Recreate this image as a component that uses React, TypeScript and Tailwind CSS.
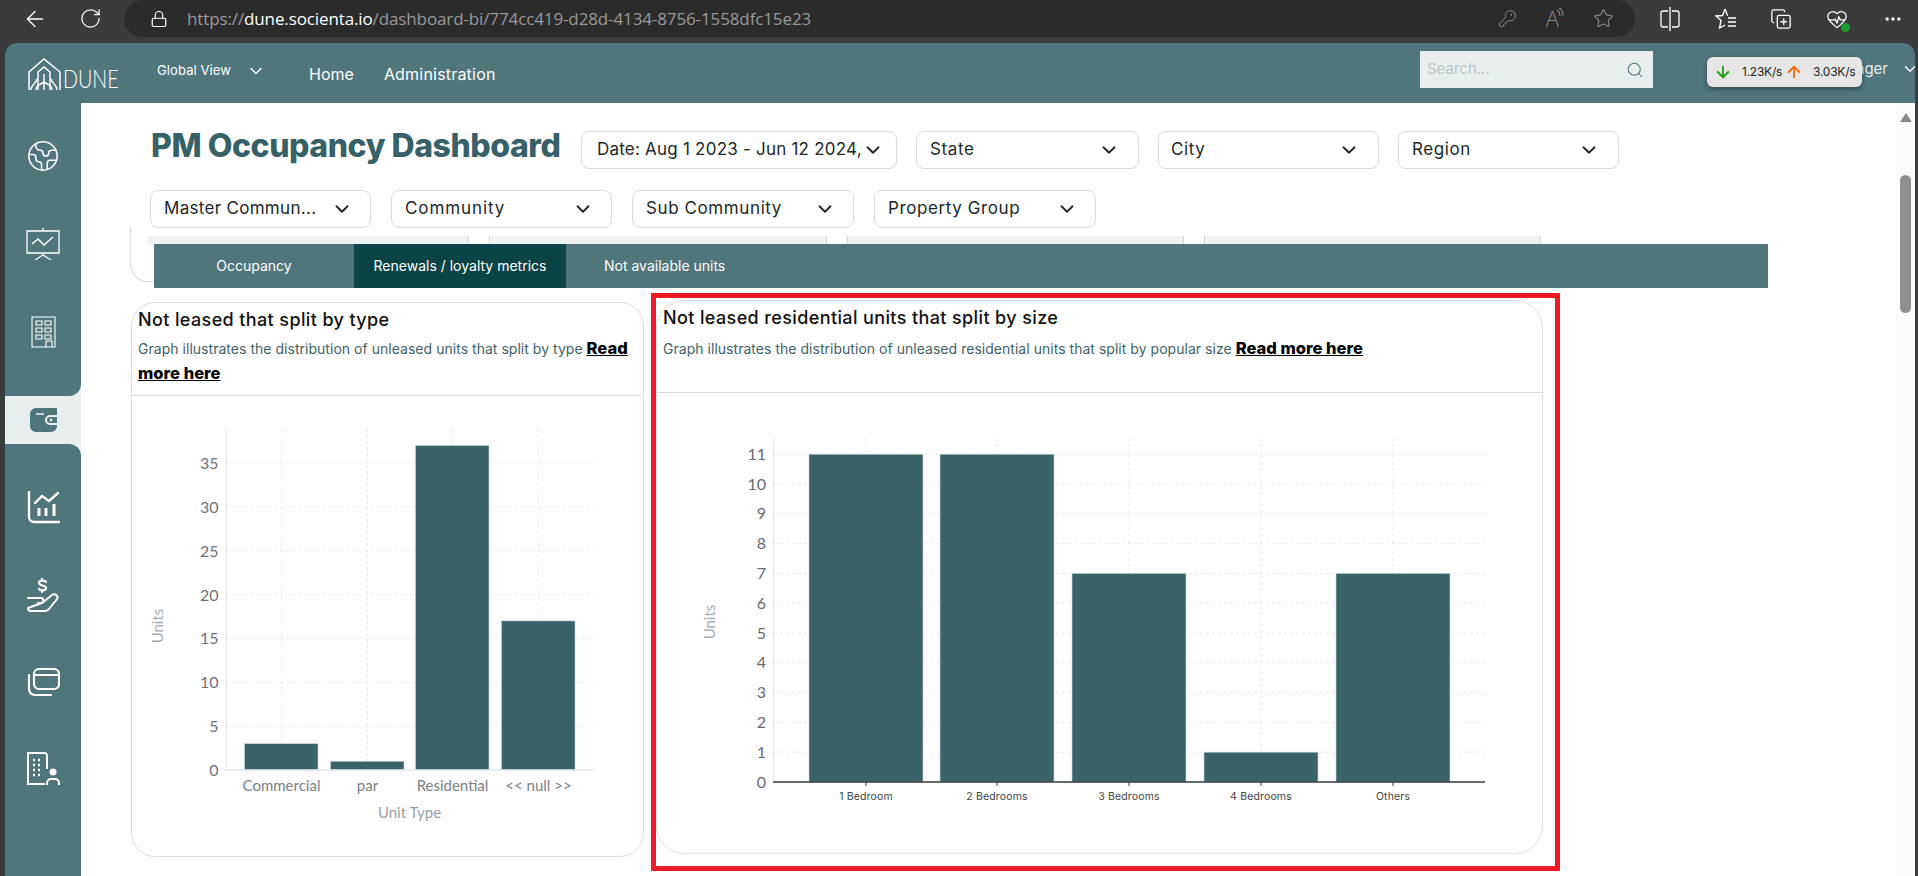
import { ArrowDown, ArrowLeft, ArrowUp, ChevronDown, CopyPlus, Earth, Ellipsis, HeartPulse, KeyRound, Lock, RotateCw, Search, Star } from 'lucide-react';

const filtersTop = [
  { label: 'Date: Aug 1 2023 - Jun 12 2024,', width: 'w-[316px]', pad: 'pr-[13px] pl-[15px] tracking-[0.22px]' },
  { label: 'State', width: 'w-[223px]', pad: 'pr-[18px] pl-[13px] tracking-[0.6px]' },
  { label: 'City', width: 'w-[221px]', pad: 'pr-[18px] pl-[12px] tracking-[0.6px]' },
  { label: 'Region', width: 'w-[221px]', pad: 'pr-[18px] pl-[13px] tracking-[0.6px]' },
];

const filtersBottom = [
  { label: 'Master Commun...', width: 'w-[221px]', pad: 'pr-[17px] pl-[13px] tracking-[0.3px]' },
  { label: 'Community', width: 'w-[221px]', pad: 'pr-[17px] pl-[13px] tracking-[0.9px]' },
  { label: 'Sub Community', width: 'w-[222px]', pad: 'pr-[17px] pl-[13px] tracking-[0.6px]' },
  { label: 'Property Group', width: 'w-[222px]', pad: 'pr-[17px] pl-[13px] tracking-[0.6px]' },
];

const typeBars = [
  { label: 'Commercial', value: 3, x: 244 },
  { label: 'par', value: 1, x: 330 },
  { label: 'Residential', value: 37, x: 415 },
  { label: '<< null >>', value: 17, x: 501 },
];

const sizeBars = [
  { label: '1 Bedroom', value: 11, x: 809 },
  { label: '2 Bedrooms', value: 11, x: 940 },
  { label: '3 Bedrooms', value: 7, x: 1072 },
  { label: '4 Bedrooms', value: 1, x: 1204 },
  { label: 'Others', value: 7, x: 1336 },
];

function FilterButton({ label, width, pad }: { label: string; width: string; pad: string }) {
  return (
    <button
      type="button"
      className={`flex h-[38px] items-center justify-between rounded-lg border border-[#d8dbdc] bg-white text-[17px] whitespace-nowrap text-[#20282a] ${width} ${pad}`}
    >
      <span className="-mt-px">{label}</span>
      <ChevronDown size={22} strokeWidth={2} className="shrink-0 text-[#1f2628]" />
    </button>
  );
}

function LogoMark() {
  return (
    <svg width="34" height="33" viewBox="0 0 34 33" fill="none" stroke="white" strokeWidth="1.5" className="shrink-0">
      <path d="M1 32V14L16 1l16 13v18" />
      <path d="M10 32V14l6-5 6 5v18" />
      <path d="M3 32c0-6 5-6 6-11M16 32V16M29 32c0-6-5-6-6-11M8 32c0-4 3-5 8-8 5 3 8 4 8 8" />
    </svg>
  );
}

function PresentationIcon() {
  return (
    <svg width="34" height="32" viewBox="0 0 34 32" fill="none" stroke="white" strokeWidth="1.3">
      <path d="M17 0v3M1 3h32v22H1zM17 25v2M9 32l8-5 8 5" />
      <path d="M6 16l6-5 6 6 9-8" strokeWidth="1.5" />
    </svg>
  );
}

function BuildingIcon() {
  return (
    <svg width="25" height="32" viewBox="0 0 25 32" fill="none" stroke="white" strokeWidth="1.1">
      <path d="M1 1h23v30H1z" />
      <path d="M5 5h6v4H5zM14 5h6v4h-6zM5 12h6v4H5zM14 12h6v4h-6zM5 19h6v4H5zM14 19h6v4h-6zM15 31v-6h6v6" />
    </svg>
  );
}

function WalletIcon() {
  return (
    <svg width="27" height="24" viewBox="0 0 27 24">
      <path d="M6 0h21v7h-7a5 5 0 0 0 0 10h7v1a6 6 0 0 1-6 6H6a6 6 0 0 1-6-6V6a6 6 0 0 1 6-6z" fill="#50767c" />
      <path d="M6 6h8" stroke="#e8eeee" strokeWidth="1.6" />
      <path d="M20 9h7v6h-7a3 3 0 0 1 0-6z" fill="#50767c" />
      <circle cx="21" cy="12" r="1.4" fill="#e8eeee" />
    </svg>
  );
}

function ChartLineIcon() {
  return (
    <svg width="33" height="33" viewBox="0 0 33 33" fill="none" stroke="white" strokeWidth="2.4" strokeLinecap="round">
      <path d="M2 1v25a5 5 0 0 0 5 5h25" />
      <path d="M8 12l7-7 7 5 9-8" />
      <path d="M12 17v8M19 17v8M27 13v12" strokeWidth="3" strokeLinecap="butt" />
    </svg>
  );
}

function HandMoneyIcon() {
  return (
    <svg width="33" height="34" viewBox="0 0 33 34" fill="none" stroke="white" strokeWidth="2" strokeLinecap="round" strokeLinejoin="round">
      <path d="M15 1v1M19 4c-1-2-7-2-7 1 0 3 7 2 7 5 0 3-6 3-7 1M15 13v1" strokeWidth="2.2" />
      <path d="M1 20h13c3 0 3 5 0 5h-3M15 25l10-8c3-2 7 1 5 4l-8 10c-1 1-2 2-4 2H4a3 3 0 0 1-3-3z" />
    </svg>
  );
}

function CardsIcon() {
  return (
    <svg width="33" height="29" viewBox="0 0 33 29" fill="none" stroke="white" strokeWidth="2.2" strokeLinecap="round">
      <rect x="7" y="2" width="25" height="20" rx="5" />
      <path d="M8 8h23M2 8v14a6 6 0 0 0 6 6h16" />
    </svg>
  );
}

function BuildingPersonIcon() {
  return (
    <svg width="33" height="33" viewBox="0 0 33 33" fill="none" stroke="white" strokeWidth="2">
      <path d="M18 32H1V1h17a3 3 0 0 1 2 3v13" />
      <path d="M6 8h2M11 8h2M6 13h2M11 13h2M6 18h2M11 18h2M6 23h2M11 23h2" strokeWidth="2.4" />
      <circle cx="26" cy="20" r="3.5" fill="white" stroke="none" />
      <path d="M20 33v-2a4 4 0 0 1 4-4h4a4 4 0 0 1 4 4v2" />
    </svg>
  );
}

function SplitIcon() {
  return (
    <svg width="20" height="24" viewBox="0 0 20 24" fill="none" stroke="white" strokeWidth="1.3">
      <path d="M10 0v24M8 4H3a2 2 0 0 0-2 2v12a2 2 0 0 0 2 2h5M12 4h5a2 2 0 0 1 2 2v12a2 2 0 0 1-2 2h-5" />
    </svg>
  );
}

function FavoritesIcon() {
  return (
    <svg width="22" height="24" viewBox="0 0 22 24" fill="none" stroke="white" strokeWidth="1.4">
      <path d="M10 2l2.4 6H13M10 2L7.6 8.5 1 9l5 4.5L4.5 21l5.5-3" />
      <path d="M13 11h8M13 15h8M13 19h8" />
    </svg>
  );
}

function ReadAloudWaves() {
  return (
    <svg width="8" height="12" viewBox="0 0 8 12" fill="none" stroke="#8c8c8c" strokeWidth="1.1" className="-mt-[10px] -ml-[3px]">
      <path d="M1 2c2 1 3 3 3 6M3 0c3 1 4 4 4 8" />
    </svg>
  );
}

function TypeChart() {
  const unit = 8.77;
  const base = 770;
  return (
    <svg width="513" height="458" viewBox="131.5 396 513 458" className="block">
      {[5, 10, 15, 20, 25, 30, 35].map((t) => (
        <line key={t} x1="226" x2="593" y1={base - t * unit} y2={base - t * unit} stroke="#e8eaee" strokeDasharray="3 3" />
      ))}
      {typeBars.map((b) => (
        <line key={b.label} x1={b.x + 37} x2={b.x + 37} y1="429" y2={base} stroke="#e8eaee" strokeDasharray="3 3" />
      ))}
      <line x1="226" x2="226" y1="429" y2={base} stroke="#e4e6ec" />
      {typeBars.map((b) => (
        <rect key={b.label} x={b.x} y={base - b.value * unit} width="73.5" height={b.value * unit} fill="#3b6266" stroke="#c9d6d8" strokeWidth="0.6" />
      ))}
      <line x1="223" x2="593" y1={base} y2={base} stroke="#e4e6f0" strokeWidth="1.5" />
      {[0, 5, 10, 15, 20, 25, 30, 35].map((t) => (
        <text key={t} x="218" y={base - t * unit + 6} textAnchor="end" fontSize="16" fill="#6d7278" fontFamily="Lato, sans-serif">
          {t}
        </text>
      ))}
      {typeBars.map((b) => (
        <text key={b.label} x={b.x + 37} y="791" textAnchor="middle" fontSize="15" fill="#7b7f85" fontFamily="Lato, sans-serif">
          {b.label}
        </text>
      ))}
      <text x="409" y="818" textAnchor="middle" fontSize="15" fill="#9a9ea4" fontFamily="Lato, sans-serif">
        Unit Type
      </text>
      <text transform="translate(162 626) rotate(-90)" textAnchor="middle" fontSize="15" fill="#a8acb2" fontFamily="Lato, sans-serif">
        Units
      </text>
    </svg>
  );
}

function SizeChart() {
  const unit = 29.8;
  const base = 782;
  const ticks = [0, 1, 2, 3, 4, 5, 6, 7, 8, 9, 10, 11];
  return (
    <svg width="887" height="460" viewBox="657 393 887 460" className="block">
      {ticks.slice(1).map((t) => (
        <line key={t} x1="774" x2="1485" y1={base - t * unit} y2={base - t * unit} stroke="#e8eaee" strokeDasharray="3 3" />
      ))}
      {sizeBars.map((b) => (
        <line key={b.label} x1={b.x + 57} x2={b.x + 57} y1="438" y2={base} stroke="#e8eaee" strokeDasharray="3 3" />
      ))}
      <line x1="773.5" x2="773.5" y1="438" y2={base} stroke="#e4e6ec" />
      {sizeBars.map((b) => (
        <rect key={b.label} x={b.x} y={base - b.value * unit} width="114" height={b.value * unit} fill="#3b6266" stroke="#c9d6d8" strokeWidth="0.6" />
      ))}
      <line x1="773" x2="1485" y1={base} y2={base} stroke="#333b3d" strokeWidth="1.3" />
      {sizeBars.map((b) => (
        <line key={b.label} x1={b.x + 57} x2={b.x + 57} y1={base} y2={base + 4} stroke="#333b3d" />
      ))}
      {ticks.map((t) => (
        <text key={t} x="766" y={base - t * unit + 5.5} textAnchor="end" fontSize="16" fill="#666b70" fontFamily="Lato, sans-serif">
          {t}
        </text>
      ))}
      {sizeBars.map((b) => (
        <text key={b.label} x={b.x + 57} y="800" textAnchor="middle" fontSize="10.5" letterSpacing="0.15" fill="#3f4447" fontFamily="Inter, sans-serif">
          {b.label}
        </text>
      ))}
      <text transform="translate(715 622) rotate(-90)" textAnchor="middle" fontSize="15" fill="#a8acb2" fontFamily="Lato, sans-serif">
        Units
      </text>
    </svg>
  );
}

export default function App() {
  return (
    <div className="flex h-[876px] w-full flex-col overflow-hidden bg-[#3b3b3b] font-['Inter',sans-serif]">
      {/* browser toolbar */}
      <div className="flex h-[43px] shrink-0 items-start">
        <div className="flex h-[37px] w-[124px] items-center pl-[22px] text-white">
          <ArrowLeft size={26} strokeWidth={1.2} />
          <RotateCw size={23} strokeWidth={1.3} className="ml-[31px]" />
        </div>
        <div className="flex h-[37px] w-[1511px] items-center rounded-[19px] bg-[#2b2b2b] pl-[26px]">
          <Lock size={18} strokeWidth={1.6} className="text-white" />
          <span className="ml-[19px] font-['Open_Sans',sans-serif] text-[17px] tracking-[-0.12px] text-[#9a9a9a]">
            https://<span className="text-white">dune.socienta.io</span>/dashboard-bi/774cc419-d28d-4134-8756-1558dfc15e23
          </span>
          <KeyRound size={19} strokeWidth={1.2} className="ml-auto text-[#8c8c8c]" />
          <span className="ml-[29px] font-['Open_Sans',sans-serif] text-[22px] font-light text-[#8c8c8c]">A</span>
          <ReadAloudWaves />
          <Star size={21} strokeWidth={1.3} className="mr-[21px] ml-[29px] text-[#8c8c8c]" />
        </div>
        <div className="flex h-[37px] flex-1 items-center pl-[25px] text-white">
          <SplitIcon />
          <span className="ml-[35px]"><FavoritesIcon /></span>
          <CopyPlus size={22} strokeWidth={1.4} className="ml-[33px]" />
          <span className="relative ml-[34px]">
            <HeartPulse size={22} strokeWidth={1.4} />
            <span className="absolute right-[-2px] bottom-[-2px] h-[9px] w-[9px] rounded-full bg-[#1f9a2e]" />
          </span>
          <Ellipsis size={20} className="ml-[35px]" />
        </div>
      </div>

      {/* app window */}
      <div className="relative ml-[5px] mr-[3px] flex min-h-0 flex-1 flex-col overflow-hidden rounded-t-[12px] bg-[#50767c]">
        <header className="flex h-[60px] shrink-0 items-center text-white">
          <div className="ml-[23px] flex w-[90px] items-end pt-[2px]">
            <LogoMark />
            <span className="mb-[1px] ml-[1px] origin-left scale-x-[0.79] font-['Lato',sans-serif] text-[25px] leading-[24px] font-light">DUNE</span>
          </div>
          <div className="mb-[5px] ml-[39px] flex items-center text-[13px] tracking-[0.1px]">
            Global View
            <ChevronDown size={20} strokeWidth={1.8} className="ml-[15px]" />
          </div>
          <span className="mt-[2px] ml-[43px] text-[16px] leading-[24px]">Home</span>
          <span className="mt-[2px] ml-[30px] text-[16px] leading-[24px] tracking-[0.2px]">Administration</span>
          <div className="mb-[7px] ml-auto flex h-[37px] w-[233px] shrink-0 items-center justify-between bg-[#e8eeee] pr-[9px] pl-[7px]">
            <span className="text-[15px] text-[#bcc5c6]">Search...</span>
            <Search size={18} strokeWidth={1.4} className="text-[#50767c]" />
          </div>
          <div className="mb-[8px] flex w-[262px] shrink-0 items-center justify-end">
            <span className="text-[15px] whitespace-nowrap text-[#e8eeee]">Manager</span>
            <ChevronDown size={18} strokeWidth={1.8} className="-mr-[4px] ml-[13px]" />
          </div>
        </header>

        {/* network speed widget */}
        <div className="absolute top-[14px] left-[1702px] flex h-[30px] w-[155px] items-center rounded-md bg-[#e6e6e6] pl-[7px] text-[12px] tracking-[-0.25px] text-[#222] shadow-[0_2px_5px_rgba(0,0,0,0.4)]">
          <ArrowDown size={18} strokeWidth={2.4} className="text-[#1a9a12]" />
          <span className="ml-[10px]">1.23K/s</span>
          <ArrowUp size={18} strokeWidth={2.4} className="ml-[3px] text-[#ee6a0a]" />
          <span className="ml-[10px]">3.03K/s</span>
        </div>

        <div className="flex min-h-0 flex-1">
          {/* sidebar */}
          <aside className="flex w-[76px] shrink-0 flex-col bg-[#e8eeee]">
            <div className="flex h-[293px] flex-col items-center rounded-br-[12px] bg-[#50767c] pt-[9px]">
              <div className="flex h-[88px] items-center"><Earth size={34} strokeWidth={1.1} className="text-white" /></div>
              <div className="flex h-[88px] items-center"><PresentationIcon /></div>
              <div className="flex h-[88px] items-center"><BuildingIcon /></div>
            </div>
            <div className="flex h-[48px] items-center justify-center"><WalletIcon /></div>
            <div className="flex flex-1 flex-col items-center rounded-tr-[12px] bg-[#50767c] pt-[20px]">
              <div className="flex h-[87px] items-center"><ChartLineIcon /></div>
              <div className="flex h-[87px] items-center"><HandMoneyIcon /></div>
              <div className="flex h-[87px] items-center"><CardsIcon /></div>
              <div className="flex h-[87px] items-center"><BuildingPersonIcon /></div>
            </div>
          </aside>

          {/* main */}
          <main className="relative min-w-0 flex-1 overflow-hidden bg-white">
            <div className="flex items-center pt-[28px] pl-[70px]">
              <h1 className="w-[430px] pb-[8px] text-[32px] leading-[30px] font-extrabold tracking-[-0.45px] whitespace-nowrap text-[#386067]">PM Occupancy Dashboard</h1>
              <div className="flex gap-[19px]">
                {filtersTop.map((f) => (
                  <FilterButton key={f.label} {...f} />
                ))}
              </div>
            </div>
            <div className="mt-[21px] flex gap-[20px] pl-[69px]">
              {filtersBottom.map((f) => (
                <FilterButton key={f.label} {...f} />
              ))}
            </div>

            {/* cards scrolled under the tabs */}
            <div className="absolute top-[125px] left-[49px] h-[54px] w-[30px] rounded-bl-[18px] border-b border-l border-[#dcdfe1]" />
            <div className="relative mt-[8px] flex h-[8px] gap-[20px] pl-[67px]">
              <div className="w-[321px] border-r border-[#d5d8da] bg-[#f0f1f3]" />
              <div className="w-[338px] border-x border-[#d5d8da] bg-[#f0f1f3]" />
              <div className="w-[337px] border-x border-[#d5d8da] bg-[#f0f1f3]" />
              <div className="w-[337px] border-x border-[#d5d8da] bg-[#f0f1f3]" />
            </div>

            <nav className="relative ml-[73px] flex h-[44px] w-[1614px] items-center bg-[#50767c] text-[14px] text-white">
              <span className="flex h-full w-[200px] items-center justify-center pb-[2px]">Occupancy</span>
              <span className="flex h-full w-[212px] items-center justify-center bg-[#0a4447] pb-[2px] whitespace-nowrap">Renewals / loyalty metrics</span>
              <span className="ml-[38px] pb-[2px]">Not available units</span>
            </nav>

            <div className="mt-[5px] flex items-start pl-[50px]">
              <section className="mt-[9px] h-[555px] w-[513px] shrink-0 rounded-[24px] border border-[#dcdfe1]">
                <div className="h-[92px] px-[6px] pt-[4px]">
                  <h2 className="text-[18px] leading-[26px] font-medium tracking-[0.38px] text-[#111]">Not leased that split by type</h2>
                  <p className="mt-[3px] text-[14px] leading-[25px] tracking-[0.03px] text-[#3f6369]">
                    Graph illustrates the distribution of unleased units that split by type{' '}
                    <a className="text-[16.5px] leading-[20px] font-extrabold text-black underline">Read more here</a>
                  </p>
                </div>
                <div className="mr-[2px] h-px bg-[#d8dbdd]" />
                <TypeChart />
              </section>

              <div className="ml-[7px] h-[578px] w-[909px] shrink-0 border-[5px] border-[#ed1c24] pt-[2px]">
                <section className="h-[554px] w-[887px] rounded-[28px] border border-[#dcdfe1]">
                  <div className="h-[91px] px-[6px] pt-[4px]">
                    <h2 className="text-[18px] leading-[26px] font-medium tracking-[0.38px] text-[#111]">Not leased residential units that split by size</h2>
                    <p className="mt-[5px] text-[14px] leading-[25px] tracking-[0.03px] text-[#3f6369]">
                      Graph illustrates the distribution of unleased residential units that split by popular size{' '}
                      <a className="text-[16.5px] leading-[20px] font-extrabold text-black underline">Read more here</a>
                    </p>
                  </div>
                  <div className="h-px bg-[#d8dbdd]" />
                  <SizeChart />
                </section>
              </div>
            </div>

            {/* scrollbar */}
            <div className="absolute top-0 right-0 bottom-0 flex w-[19px] flex-col items-center bg-[#fbfbfb] pt-[10px]">
              <div className="h-0 w-0 border-x-[6px] border-b-[9px] border-x-transparent border-b-[#8a8a8a]" />
              <div className="mt-[53px] h-[138px] w-[11px] rounded-full bg-[#8f8f8f]" />
            </div>
          </main>
        </div>
      </div>
    </div>
  );
}
